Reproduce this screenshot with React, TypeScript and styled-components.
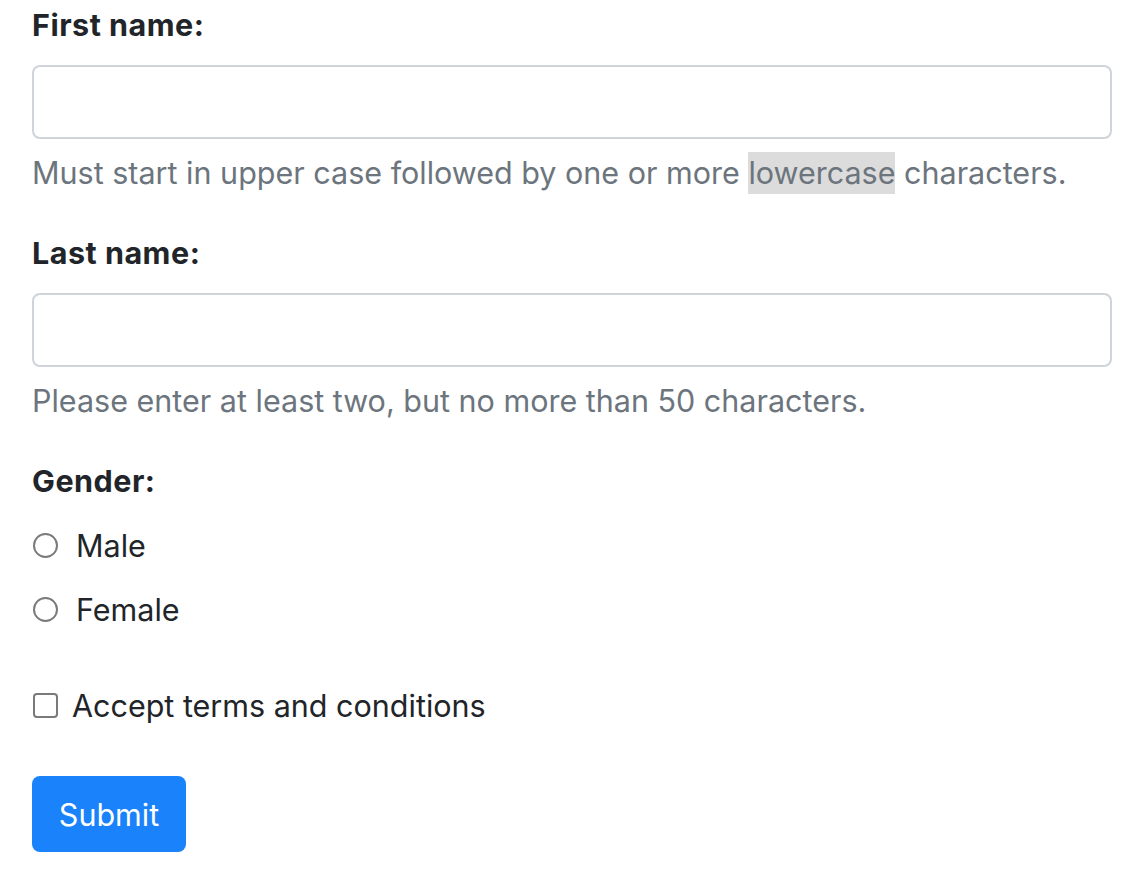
import React from "react";
import styled, { createGlobalStyle } from "styled-components";

const Global = createGlobalStyle`
  html, body { margin: 0; padding: 0; background: #fff; }
  body { font-family: Inter, "Noto Sans", "Liberation Sans", sans-serif; color: #212529; }
  * { box-sizing: border-box; }
`;

const Form = styled.form`
  display: flex;
  flex-direction: column;
  padding: 2px 30px 0 32px;
`;

const Group = styled.div`
  display: flex;
  flex-direction: column;
  margin-bottom: 35px;
`;

const Label = styled.label`
  font-size: 30.5px;
  line-height: 45px;
  font-weight: 700;
  color: #212529;
  letter-spacing: 0.5px;
`;

const Input = styled.input`
  margin-top: 18px;
  height: 74px;
  width: 100%;
  border: 2px solid #ced4da;
  border-radius: 8px;
  font-size: 30px;
  padding: 0 24px;
  background: #fff;
  outline: none;
`;

const Help = styled.div`
  margin-top: 11px;
  font-size: 30.5px;
  line-height: 45px;
  color: #6c757d;
`;

const Mark = styled.span`
  background: #dcdcdc;
  padding: 2px 0 3px;
`;

const ChoiceRow = styled.label<{ $gap: number }>`
  display: flex;
  align-items: center;
  gap: ${(p) => p.$gap}px;
  height: 64px;
  font-size: 30.5px;
  color: #212529;
`;

const Radio = styled.span`
  width: 25px;
  height: 25px;
  margin-left: 1px;
  border-radius: 50%;
  border: 2px solid #7a7a7a;
  flex: none;
`;

const Box = styled.span`
  width: 25px;
  height: 25px;
  margin-left: 1px;
  border-radius: 4px;
  border: 2px solid #7a7a7a;
  flex: none;
`;

const Gender = styled.div`
  display: flex;
  flex-direction: column;
`;

const Options = styled.div`
  display: flex;
  flex-direction: column;
  margin-top: 10px;
`;

const Terms = styled.div`
  margin-top: 32px;
`;

const Button = styled.button`
  margin-top: 39px;
  align-self: flex-start;
  width: 154px;
  height: 76px;
  border: none;
  border-radius: 8px;
  background: #1a82fb;
  color: #fff;
  font-family: inherit;
  font-size: 30.5px;
`;

export default function App() {
  return (
    <>
      <Global />
      <Form onSubmit={(e) => e.preventDefault()}>
        <Group>
          <Label>First name:</Label>
          <Input type="text" />
          <Help>
            Must start in upper case followed by one or more <Mark>lowercase</Mark> characters.
          </Help>
        </Group>
        <Group>
          <Label>Last name:</Label>
          <Input type="text" />
          <Help>Please enter at least two, but no more than 50 characters.</Help>
        </Group>
        <Gender>
          <Label>Gender:</Label>
          <Options>
            <ChoiceRow $gap={18}>
              <Radio />
              Male
            </ChoiceRow>
            <ChoiceRow $gap={18}>
              <Radio />
              Female
            </ChoiceRow>
          </Options>
        </Gender>
        <Terms>
          <ChoiceRow $gap={14}>
            <Box />
            Accept terms and conditions
          </ChoiceRow>
        </Terms>
        <Button type="submit">Submit</Button>
      </Form>
    </>
  );
}
